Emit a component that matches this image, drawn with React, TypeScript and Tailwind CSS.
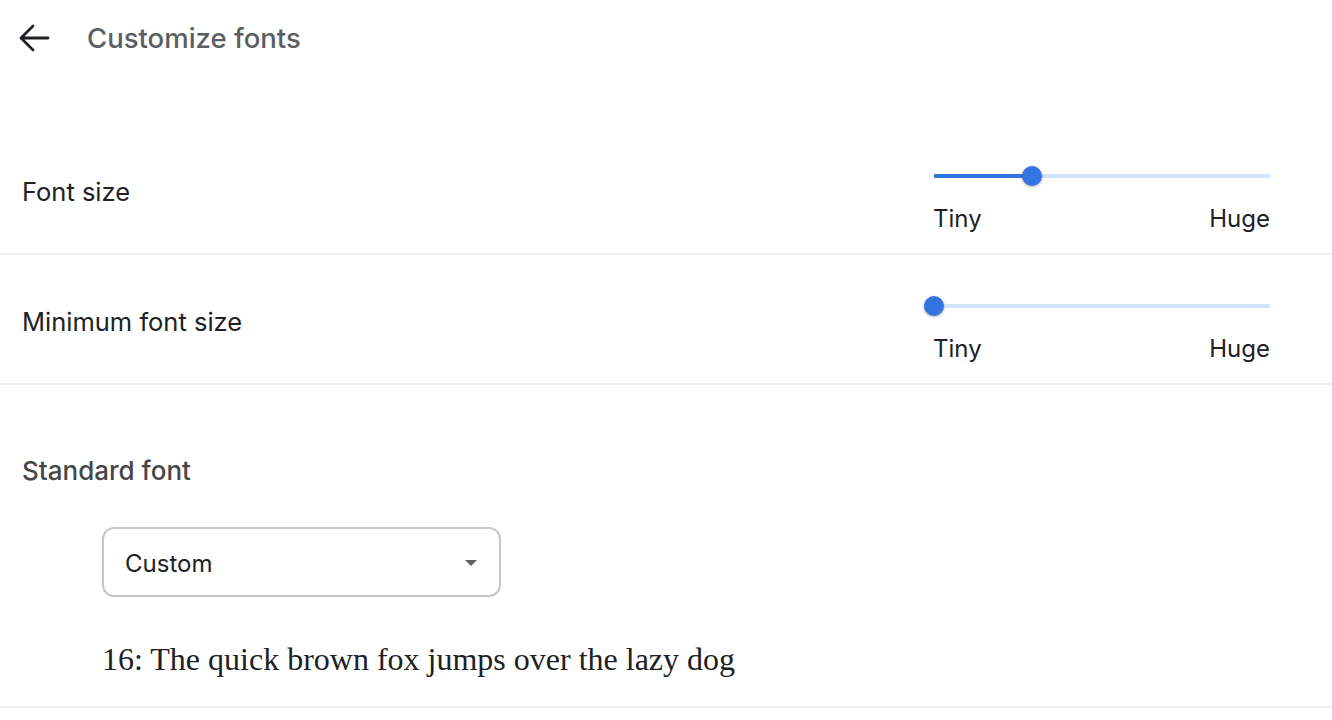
import React from "react";

const FONT = { fontFamily: "Inter, 'Noto Sans', sans-serif" };

function BackArrow() {
  return (
    <svg width="40" height="40" viewBox="0 0 40 40" fill="none">
      <path
        d="M34 20H7.5M19 8L7 20l12 12"
        stroke="#202124"
        strokeWidth="2.8"
        strokeLinecap="round"
        strokeLinejoin="round"
      />
    </svg>
  );
}

function Slider({ value }: { value: number }) {
  return (
    <div className="w-[336px] mt-[23px]">
      <div className="relative h-5">
        <div className="absolute left-0 right-0 top-[8px] h-[4px] bg-[#d3e3fd]" />
        <div
          className="absolute left-0 top-[8px] h-[4px] bg-[#3574e0]"
          style={{ width: `${value * 100}%` }}
        />
        <div
          className="absolute top-0 w-5 h-5 -ml-[10px] rounded-full bg-[#3574e0] shadow-[0_1px_3px_rgba(0,0,0,0.3)]"
          style={{ left: `${value * 100}%` }}
        />
      </div>
      <div className="flex justify-between mt-[17px] text-[24px] leading-[32px] text-[#202124]">
        <span className="-ml-px">Tiny</span>
        <span>Huge</span>
      </div>
    </div>
  );
}

function SliderRow({ label, value }: { label: string; value: number }) {
  return (
    <div className="flex items-center justify-between h-[130px] pl-[22px] pr-[62px] border-b-2 border-[#efefef]">
      <span className="mt-[6px] text-[25.5px] leading-[32px] text-[#202124]">{label}</span>
      <Slider value={value} />
    </div>
  );
}

export default function App() {
  return (
    <div className="w-[1332px] h-[720px] bg-white overflow-hidden" style={FONT}>
      <header className="flex items-center h-[76px] pl-[14px]">
        <BackArrow />
        <h1 className="ml-[33px] text-[27.5px] leading-[36px] font-medium text-[#5b5e62]">
          Customize fonts
        </h1>
      </header>

      <div className="mt-[49px]">
        <SliderRow label="Font size" value={0.292} />
        <SliderRow label="Minimum font size" value={0} />

        <section className="pt-[70px] pb-[28px] border-b-2 border-[#efefef]">
          <h2 className="pl-[22px] text-[26px] leading-[32px] font-medium text-[#474747]">
            Standard font
          </h2>
          <div className="ml-[102px] mt-[40px] w-[399px] h-[70px] rounded-[12px] border-2 border-[#c7c7c7] flex items-center justify-between pl-[21px] pr-[22px]">
            <span className="mt-[3px] text-[24px] leading-[32px] text-[#202124]">Custom</span>
            <svg width="12" height="6" viewBox="0 0 12 6" className="mt-[2px]">
              <path d="M0 0h12L6 6z" fill="#5f6368" />
            </svg>
          </div>
          <p
            className="ml-[102px] mt-[44px] text-[32px] leading-[37px] text-[#202124]"
            style={{ fontFamily: "'Liberation Serif', serif" }}
          >
            16: The quick brown fox jumps over the lazy dog
          </p>
        </section>
      </div>
    </div>
  );
}
